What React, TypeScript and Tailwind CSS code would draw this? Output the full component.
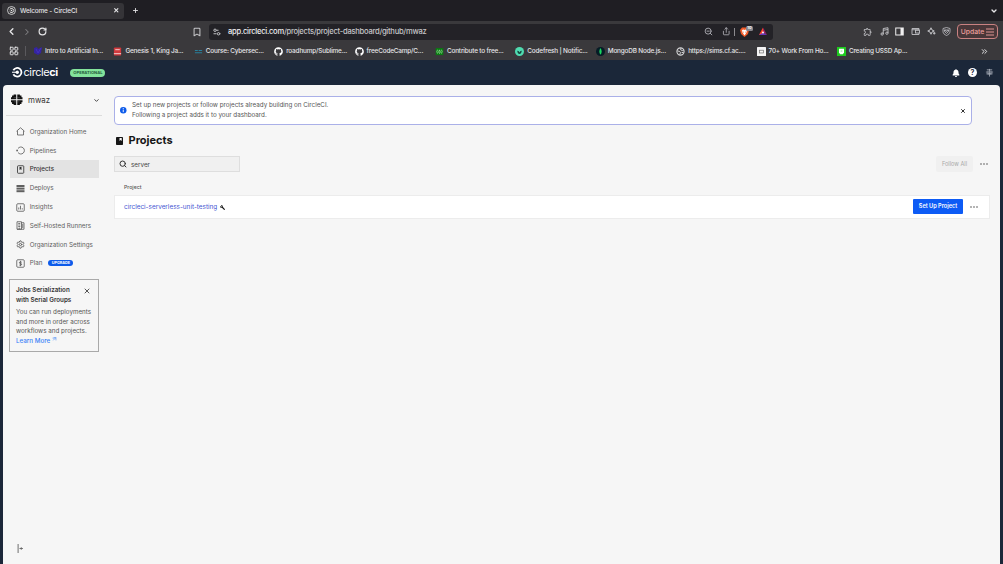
import React from "react";
import {
  Bookmark,
  ChevronDown,
  ChevronLeft,
  ChevronRight,
  ChevronsRight,
  LayoutGrid,
  PanelRight,
  Plus,
  RotateCw,
  Search,
  Settings,
  Share,
  Wallet,
  X,
  ZoomOut,
} from "lucide-react";
import { FaBell, FaGithub, FaWrench } from "react-icons/fa";
import { MdOutlineExtension } from "react-icons/md";

function CircleMark({ className }: { className?: string }) {
  return (
    <svg viewBox="0 0 20 20" className={className} fill="none">
      <path d="M2.6 6.2A8.2 8.2 0 1 1 2.6 13.8" stroke="currentColor" strokeWidth="3.4" />
      <path d="M0 10h9" stroke="currentColor" strokeWidth="2" />
      <circle cx="10" cy="10" r="3.2" fill="currentColor" />
    </svg>
  );
}

function TabMark({ className }: { className?: string }) {
  return (
    <svg viewBox="0 0 20 20" className={className} fill="none" stroke="currentColor">
      <circle cx="10" cy="10" r="8.8" strokeWidth="1.8" />
      <path d="M6 8A4.6 4.6 0 1 1 6 12" strokeWidth="2.2" />
      <circle cx="10" cy="10" r="1.8" fill="currentColor" stroke="none" />
    </svg>
  );
}

const bookmarks = [
  {
    label: "Intro to Artificial In...",
    icon: (
      <svg viewBox="0 0 10 10" className="size-[10px]">
        <path d="M1 2l3-1 1 2 4-2-1 6-3 2-4-2z" fill="#3424a0" />
        <path d="M3 3l2 4 3-5" stroke="#4430bd" fill="none" />
      </svg>
    ),
  },
  {
    label: "Genesis 1, King Ja...",
    icon: (
      <svg viewBox="0 0 10 10" className="size-[9px]">
        <rect x="1" y=".5" width="8" height="9" rx="1" fill="#d0393c" />
        <path d="M2.5 3h5M1 7.4h8" stroke="#f6dcdc" strokeWidth="1" />
      </svg>
    ),
  },
  {
    label: "Course: Cybersec...",
    icon: (
      <svg viewBox="0 0 10 10" className="size-[9px]" stroke="#28809c" strokeWidth="1.2" fill="none">
        <path d="M1 3.8h3.2M5.2 3.8H9M1 6.3h8" />
      </svg>
    ),
  },
  { label: "roadhump/Sublime...", icon: <FaGithub className="size-[9px] text-white" /> },
  { label: "freeCodeCamp/C...", icon: <FaGithub className="size-[9px] text-white" /> },
  {
    label: "Contribute to free...",
    icon: (
      <svg viewBox="0 0 10 10" className="size-[9px]">
        <rect x=".8" y="1.2" width="8.4" height="7.8" fill="#0a7a12" />
        <path
          d="M2.8 3Q1.3 5 2.8 7.3M7.2 3Q8.7 5 7.2 7.3M5 3.2Q3 6 5 7.2Q7 6 5 3.2"
          stroke="#b8f0b8"
          strokeWidth=".7"
          fill="none"
        />
      </svg>
    ),
  },
  {
    label: "Codefresh | Notific...",
    icon: (
      <svg viewBox="0 0 10 10" className="size-[9px]">
        <circle cx="5" cy="5" r="5" fill="#4fdcb0" />
        <path d="M2.5 4.2Q4.5 4 5 6Q5.5 4 7.5 4.2Q7 7.8 5 7.8T2.5 4.2" fill="#14443e" />
      </svg>
    ),
  },
  {
    label: "MongoDB Node.js...",
    icon: (
      <svg viewBox="0 0 10 10" className="size-[9px]">
        <circle cx="5" cy="5" r="5" fill="#061c26" />
        <path d="M5 1Q7.6 5 5 8.6Q2.4 5 5 1" fill="#18d860" />
      </svg>
    ),
  },
  {
    label: "https://sims.cf.ac....",
    icon: (
      <svg viewBox="0 0 10 10" className="size-[9px]">
        <circle cx="5" cy="5" r="4" fill="none" stroke="#d4d4d6" strokeWidth="1.2" />
        <path d="M1.5 4.3L4.2 5l.8 1.3L4 8.6M5.5 1.3L5 3l2 1 1.7-.6M6.2 6l2.2.3" fill="none" stroke="#d4d4d6" strokeWidth="1.1" />
      </svg>
    ),
  },
  {
    label: "70+ Work From Ho...",
    icon: (
      <svg viewBox="0 0 10 10" className="size-[9px]">
        <rect width="10" height="10" rx=".6" fill="#f4f4f4" />
        <rect x="2.8" y="3.6" width="4.4" height="3" fill="none" stroke="#777" strokeWidth=".8" />
      </svg>
    ),
  },
  {
    label: "Creating USSD Ap...",
    icon: (
      <svg viewBox="0 0 10 10" className="size-[9px]">
        <rect width="10" height="10" fill="#1fca1f" />
        <path d="M2.2 2h5.6v4L6.5 8h-3L2.2 6z" fill="#fff" />
        <path d="M4 4.5h2" stroke="#1fca1f" strokeWidth=".6" />
      </svg>
    ),
  },
];

function BrowserChrome() {
  return (
    <div className="bg-[#3a393c] text-[#e6e6e8]">
      {/* Tab strip */}
      <div className="flex h-[21px] items-center bg-[#1f1e23] pl-[2px] pr-[5.5px]">
        <div className="flex h-[16px] w-[122px] items-center rounded-[3px] bg-[#353438] pl-[5px] pr-[5px]">
          <TabMark className="size-[9px] shrink-0 text-[#e8e8e8]" />
          <span className="ml-[4px] whitespace-nowrap pt-px text-[6.4px] font-medium leading-[10px] tracking-[-0.015em]">
            Welcome - CircleCI
          </span>
          <X className="ml-auto size-[6.5px]" strokeWidth={4} />
        </div>
        <Plus className="ml-[8px] size-[7px]" strokeWidth={3} />
        <ChevronDown className="ml-auto size-[8px]" strokeWidth={4} />
      </div>

      {/* Address bar */}
      <div className="flex h-[21px] items-center">
        <div className="flex w-[209px] shrink-0 items-center pl-[6px]">
          <ChevronLeft className="size-[11px]" strokeWidth={3} />
          <ChevronRight className="ml-[5px] size-[10px] text-[#818084]" strokeWidth={2.5} />
          <RotateCw className="ml-[6px] size-[9px]" strokeWidth={3.2} />
          <Bookmark className="ml-auto mr-[7px] size-[10px] text-[#c4c4c7]" strokeWidth={2.5} />
        </div>
        <div className="flex h-[16px] w-[564px] shrink-0 items-center rounded-[3px] bg-[#232227] pl-[4px]">
          <svg viewBox="0 0 16 16" className="size-[8px]" fill="none" stroke="#c6c6c9" strokeWidth="1.9">
            <path d="M6.5 4.5H11M1 11.5h6M13 11.5h2" />
            <circle cx="4" cy="4.5" r="2.4" />
            <circle cx="11" cy="11.5" r="2.4" />
          </svg>
          <span className="ml-[7px] whitespace-nowrap text-[7.6px] font-medium leading-[12px] tracking-[-0.035em] text-[#c6c6c9]">
            <span className="text-[#efeff1]">app.circleci.com</span>/projects/project-dashboard/github/mwaz
          </span>
          <div className="ml-auto flex items-center pr-[5px]">
            <ZoomOut className="size-[9px] text-[#aaaab0]" strokeWidth={2.5} />
            <Share className="ml-[9px] size-[8.5px] text-[#aaaab0]" strokeWidth={2.5} />
            <span className="ml-[4px] h-[8px] w-px bg-[#8b8a8e]" />
            <div className="relative ml-[5px]">
              <svg viewBox="0 0 18 20" className="h-[10px] w-[9px]">
                <path d="M4 1h10l4 5-2 8-7 6-7-6-2-8z" fill="#f05a28" />
                <path d="M4 6l3-1 2 1 2-1 3 1-1 5-4 6-4-6z" fill="#fff" />
                <path d="M6 9l2 1-1 2zM12 9l-2 1 1 2z" fill="#f05a28" />
              </svg>
              <span className="absolute left-[6px] top-[-1px] flex h-[5px] w-[7px] items-center justify-center rounded-[1.5px] bg-[#85848a] text-[4px] font-semibold text-white">
                10
              </span>
            </div>
            <svg viewBox="0 0 20 20" className="ml-[9px] h-[9px] w-[10px]">
              <path d="M10 1L1 18h9V11z" fill="#ff4724" />
              <path d="M10 1l9 17-9-7z" fill="#9e1f63" />
              <path d="M1 18h18l-9-6z" fill="#6c35b5" />
              <path d="M10 9l-3 5h6z" fill="#fff" />
            </svg>
          </div>
        </div>
        <div className="ml-auto flex items-center gap-[6.7px] pr-[5px] text-[#c2c2c6]">
          <MdOutlineExtension className="size-[9.5px]" />
          <svg viewBox="0 0 18 18" className="size-[9px]" fill="none" stroke="currentColor" strokeWidth="1.9">
            <path d="M6.5 14V3L16 1.5V12M6.5 6.5L16 5" />
            <circle cx="4.3" cy="14" r="2.3" />
            <circle cx="13.8" cy="12.4" r="2.3" />
          </svg>
          <svg viewBox="0 0 18 18" className="size-[9px] text-[#f0f0f0]">
            <rect x="1.5" y="2" width="15" height="14" fill="none" stroke="currentColor" strokeWidth="2" />
            <path d="M11 2h5v14h-5z" fill="currentColor" />
          </svg>
          <svg viewBox="0 0 18 18" className="size-[9px]" fill="none" stroke="currentColor" strokeWidth="1.8">
            <path d="M16 6V3H2v12h14v-3" />
            <rect x="9" y="6.5" width="8" height="5.5" />
            <path d="M2 5.5h14" />
          </svg>
          <svg viewBox="0 0 18 18" className="size-[9px]" fill="none" stroke="currentColor" strokeWidth="2">
            <path d="M8 1.5l2 4.5 4.5 2-4.5 2-2 4.5L6 10 1.5 8 6 6z" />
            <path d="M12 12.5h5M14.5 10v5" />
          </svg>
          <svg viewBox="0 0 18 18" className="size-[9px]" fill="none" stroke="currentColor" strokeWidth="1.6">
            <path d="M9 1l7 2v6c0 4-3 6-7 8-4-2-7-4-7-8V3z" />
            <path d="M5 6h8v3l-4 4-4-4zM5 6l4 3 4-3" />
          </svg>
          <div className="ml-[-1px] flex h-[15px] w-[41px] items-center justify-center rounded-[4px] border border-[#c98282] bg-[#493739] text-[#f0a09e]">
            <span className="pt-px text-[6.8px] font-medium leading-[10px]">Update</span>
            <svg viewBox="0 0 8 8" className="ml-[2px] size-[8px]" stroke="currentColor" strokeWidth="0.9">
              <path d="M0 1h8M0 4h8M0 7h8" />
            </svg>
          </div>
        </div>
      </div>

      {/* Bookmarks */}
      <div className="flex h-[18px] items-center pl-[9px] pr-[14px]">
        <LayoutGrid className="size-[10px] shrink-0" strokeWidth={2.3} />
        <span className="ml-[6px] h-[10px] w-px shrink-0 bg-[#5a595d]" />
        <div className="ml-[7px] flex shrink-0">
          {bookmarks.map((item) => (
            <div key={item.label} className="flex w-[80.4px] items-center">
              <span className="flex w-[12px] shrink-0">{item.icon}</span>
              <span className="whitespace-nowrap text-[6.4px] font-medium leading-[10px] tracking-[-0.025em]">
                {item.label}
              </span>
            </div>
          ))}
        </div>
        <ChevronsRight className="ml-auto size-[9px] shrink-0" strokeWidth={2.6} />
      </div>
    </div>
  );
}

function AppHeader() {
  return (
    <header className="flex h-[25px] items-center pl-[12px] pr-[9px] text-white">
      <CircleMark className="size-[10.5px]" />
      <span className="ml-[1px] pt-px text-[10.8px] leading-none tracking-[-0.03em]">
        circle<span className="font-bold">ci</span>
      </span>
      <span className="ml-[12.5px] flex h-[8px] w-[35px] items-center justify-center rounded-full bg-[#83e39b] pt-px text-[4.1px] font-bold leading-[6px] text-[#235b3a]">
        OPERATIONAL
      </span>
      <div className="ml-auto flex items-center">
        <FaBell className="size-[8px]" />
        <span className="ml-[8.5px] flex size-[9px] items-center justify-center rounded-full bg-white text-[7px] font-bold leading-[9px] text-[#1b2739]">
          ?
        </span>
        <svg viewBox="0 0 20 20" className="ml-[8px] size-[9px]" fill="none" stroke="#b6bcc6" strokeWidth="1.6">
          <path d="M4 4h12M2 9h5M13 9h5M3 13h14M10 2v17M7 6v9M13 6v9" />
        </svg>
      </div>
    </header>
  );
}

const navItems = [
  {
    label: "Organization Home",
    icon: <path d="M1 8.5L9 1.5l8 7M3 7.5V16h12V7.5" />,
  },
  {
    label: "Pipelines",
    icon: (
      <>
        <path d="M4 5A7 7 0 1 1 4 13" />
        <circle cx="2.2" cy="9" r="1.8" fill="currentColor" stroke="none" />
      </>
    ),
  },
  {
    label: "Projects",
    active: true,
    icon: (
      <>
        <rect x="3" y="1.5" width="12.5" height="15" rx="1.5" />
        <path d="M7 4h4v6L9 8.5 7 10z" fill="currentColor" stroke="none" />
      </>
    ),
  },
  {
    label: "Deploys",
    icon: (
      <g fill="currentColor" stroke="none">
        <rect x="1" y="2" width="16" height="4" />
        <rect x="1" y="7.2" width="16" height="4" />
        <rect x="1" y="12.4" width="16" height="4" />
      </g>
    ),
  },
  {
    label: "Insights",
    icon: (
      <>
        <rect x="1.5" y="1.5" width="15" height="15" rx="2" />
        <path d="M5.5 9v4M9 5.5V13M12.5 10.5V13" />
      </>
    ),
  },
  {
    label: "Self-Hosted Runners",
    icon: (
      <>
        <path d="M2 16.5V1.5h9v15zM11 3.5h5v13H2" />
        <path d="M4.5 5h4M4.5 8h4M4.5 11h4M13.5 6v8M6.5 13v3" />
      </>
    ),
  },
  { label: "Organization Settings", settings: true },
  {
    label: "Plan",
    badge: "UPGRADE",
    icon: (
      <>
        <rect x="1.5" y="1.5" width="15" height="15" rx="2" />
        <path d="M11.5 6.5Q9 4.8 7 6.5T9 9t2 2.7T6.5 12M9 3.7v10.6" />
      </>
    ),
  },
];

function Sidebar() {
  return (
    <aside className="flex w-[102px] shrink-0 flex-col">
      <div className="mx-[3px] flex h-[31px] items-center border-b border-[#dcdcdc] pl-[5px] pr-[2.5px]">
        <svg viewBox="0 0 22 22" className="size-[11.5px]">
          <path d="M5 1h5v9H0V6h2V3h3zM12 1h5v2h3v3h2v4H12zM0 12h10v9H5v-2H2v-3H0zM12 12h10v4h-2v3h-3v2h-5z" fill="#111" />
          <path d="M5 7h5M12 7h5M6 15h4M12 15h4" stroke="#777" strokeWidth=".8" />
        </svg>
        <span className="ml-[5.5px] text-[7.9px] leading-[12px] text-[#333333]">mwaz</span>
        <ChevronDown className="ml-auto size-[7px] text-[#333333]" strokeWidth={3} />
      </div>

      <nav className="ml-[7px] mt-[6px] w-[89px]">
        {navItems.map((item) => (
          <div
            key={item.label}
            className={`flex h-[18.8px] items-center pl-[6px] pt-px text-[6.25px] leading-[10px] ${
              item.active ? "bg-[#e3e3e3] font-medium text-[#343434]" : "text-[#606060]"
            }`}
          >
            {item.settings ? (
              <Settings className="size-[9px] shrink-0" strokeWidth={2.6} />
            ) : (
              <svg viewBox="0 0 18 18" className="size-[9px] shrink-0" fill="none" stroke="currentColor" strokeWidth="1.7">
                {item.icon}
              </svg>
            )}
            <span className="ml-[4.7px] whitespace-nowrap">{item.label}</span>
            {item.badge && (
              <span className="ml-[6px] flex h-[6px] w-[25px] items-center justify-center rounded-full bg-[#0d5bea] text-[3.8px] font-bold leading-[6px] text-white">
                {item.badge}
              </span>
            )}
          </div>
        ))}
      </nav>

      <div className="ml-[6px] mt-[6.6px] h-[73px] w-[90px] border border-[#a9a9a9] px-[6px] pt-[6.4px] text-[6.25px] leading-[9.4px] text-[#555555]">
        <div className="flex justify-between font-semibold text-[#343434]">
          <span className="whitespace-nowrap">
            Jobs Serialization
            <br />
            with Serial Groups
          </span>
          <X className="mr-[1px] mt-[0.5px] size-[8px] shrink-0" strokeWidth={2.5} />
        </div>
        <p className="mt-[3.3px] whitespace-nowrap">
          You can run deployments
          <br />
          and more in order across
          <br />
          workflows and projects.
        </p>
        <a className="flex font-medium text-[#3b82f6]">
          Learn More
          <svg viewBox="0 0 8 8" className="ml-[2px] size-[4.5px]" fill="none" stroke="currentColor">
            <path d="M1 2h3M3 1h4v5M7 1L2 6" />
          </svg>
        </a>
      </div>

      <svg viewBox="0 0 14 18" className="mb-[11px] ml-[14px] mt-auto h-[9px] w-[7px]" fill="none" stroke="#555555" strokeWidth="1.7">
        <path d="M2.2 0v18M5 9h6M8 6.5L10.5 9 8 11.5" />
      </svg>
    </aside>
  );
}

function Dots() {
  return (
    <svg viewBox="0 0 8 2" className="h-[2px] w-[8px]" fill="#555555">
      <circle cx="1" cy="1" r=".8" />
      <circle cx="4" cy="1" r=".8" />
      <circle cx="7" cy="1" r=".8" />
    </svg>
  );
}

function ProjectsPage() {
  return (
    <main className="flex min-w-0 flex-1 flex-col pl-[9px] pr-[10px] pt-[11px]">
      <div className="mr-[18.5px] flex h-[29px] items-center rounded-[4px] border border-[#aab0e8] bg-white pl-[5px] pr-[5px]">
        <svg viewBox="0 0 12 12" className="size-[6.5px]">
          <circle cx="6" cy="6" r="6" fill="#0d5bea" />
          <path d="M6 2v2M6 5v4.5" stroke="#fff" strokeWidth="1.7" />
        </svg>
        <p className="ml-[5.5px] text-[6.25px] leading-[9.4px] text-[#555555]">
          Set up new projects or follow projects already building on CircleCI.
          <br />
          Following a project adds it to your dashboard.
        </p>
        <X className="ml-auto size-[6px] text-[#333333]" strokeWidth={4} />
      </div>

      <h1 className="mt-[8px] flex h-[15px] items-center text-[11px] font-bold leading-[15px] text-[#161616]">
        <svg viewBox="0 0 14 16" className="ml-[2px] h-[8px] w-[7px]">
          <rect width="14" height="16" rx="1.5" fill="#161616" />
          <path d="M7 2h4.5v6L9.2 6 7 8z" fill="#f6f6f6" />
        </svg>
        <span className="ml-[5.5px]">Projects</span>
      </h1>

      <div className="mt-[8px] flex h-[16px] items-center">
        <div className="flex h-[16px] w-[126px] items-center border border-[#dedede] bg-[#f0f0f0] pl-[4px]">
          <Search className="size-[8px] text-[#333333]" strokeWidth={3} />
          <span className="ml-[4px] pt-px text-[6.3px] leading-[10px] text-[#444444]">server</span>
        </div>
        <span className="ml-auto flex h-[16px] w-[37px] items-center justify-center rounded-[2px] bg-[#f0f0f0] text-[5.6px] leading-[9px] text-[#a8a8a8]">
          Follow All
        </span>
        <span className="ml-[7px] mr-[2px]">
          <Dots />
        </span>
      </div>

      <div className="mt-[11px] pl-[10px] text-[5.2px] font-medium leading-[9px] text-[#555555]">Project</div>

      <div className="mt-[3px] flex h-[24px] items-center border border-[#ececec] bg-white pl-[9px]">
        <a className="text-[6.4px] leading-[10px] text-[#4656d2]">circleci-serverless-unit-testing</a>
        <FaWrench className="ml-[3px] size-[5px] -scale-x-100 text-[#161616]" />
        <button className="mb-px ml-auto h-[15px] w-[50px] rounded-[1px] bg-[#0d5bf5] text-[5.6px] font-semibold leading-[15px] text-white">
          Set Up Project
        </button>
        <span className="ml-[7px] mr-[11px]">
          <Dots />
        </span>
      </div>
    </main>
  );
}

export default function App() {
  return (
    <div className="flex h-[564px] w-[1003px] flex-col overflow-hidden bg-[#1b2739] font-['Inter',sans-serif]">
      <BrowserChrome />
      <AppHeader />
      <div className="ml-[3px] mr-[3px] flex min-h-0 flex-1 rounded-t-[4px] bg-[#f6f6f6]">
        <Sidebar />
        <ProjectsPage />
      </div>
    </div>
  );
}
